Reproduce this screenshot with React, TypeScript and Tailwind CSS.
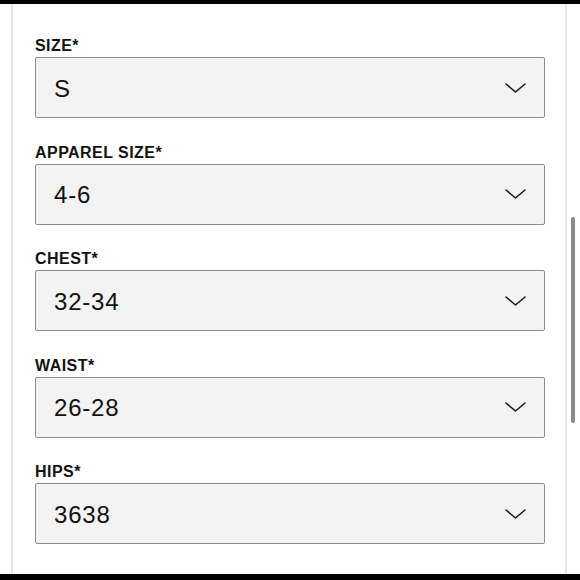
import React from "react";

const fields = [
  { label: "SIZE*", value: "S" },
  { label: "APPAREL SIZE*", value: "4-6" },
  { label: "CHEST*", value: "32-34" },
  { label: "WAIST*", value: "26-28" },
  { label: "HIPS*", value: "3638" },
];

function Chevron() {
  return (
    <svg width="21" height="10" viewBox="0 0 21 10" fill="none" className="block">
      <path d="M1 1 L10.5 9 L20 1" stroke="#1a1a1a" strokeWidth="1.6" strokeLinecap="round" strokeLinejoin="round" />
    </svg>
  );
}

export default function App() {
  return (
    <div
      className="relative w-[580px] h-[580px] bg-white overflow-hidden flex flex-col"
      style={{ fontFamily: '"Liberation Sans", Arial, sans-serif' }}
    >
      <div className="h-[4px] bg-black shrink-0" />
      <div className="flex-1 flex">
        <div className="w-[11px] shrink-0" />
        <div className="w-[2px] bg-[#e6e6e6] shrink-0" />
        <div className="flex-1 pl-[22px] pr-[20px] pt-[32px] flex flex-col gap-[24.5px]">
          {fields.map((f) => (
            <div key={f.label} className="flex flex-col gap-[1px]">
              <div className="text-[16px] leading-[20px] font-bold text-[#111] tracking-[0.45px]">{f.label}</div>
              <div className="h-[61px] bg-[#f3f3f3] border border-[#8c8c8c] rounded-[2px] flex items-center justify-between pl-[18px] pr-[18px]">
                <span className="text-[24px] leading-[28px] pt-[2px] text-[#111] tracking-[0.8px]">{f.value}</span>
                <Chevron />
              </div>
            </div>
          ))}
        </div>
        <div className="w-[2px] bg-[#e6e6e6] shrink-0" />
        <div className="w-[13px] shrink-0" />
      </div>
      <div className="h-[6px] bg-black shrink-0" />
      <div className="absolute left-[571px] top-[217px] w-[4px] h-[206px] rounded-full bg-[#8a8a8a]" />
    </div>
  );
}
